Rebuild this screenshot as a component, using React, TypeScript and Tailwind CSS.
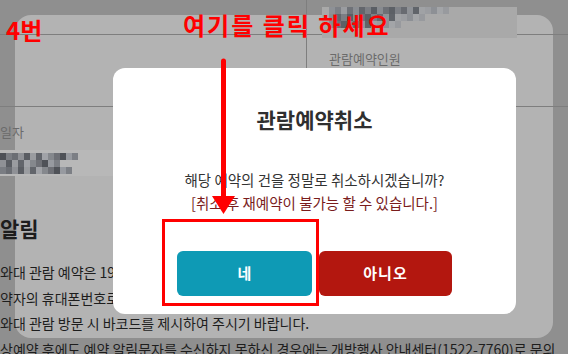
const KR = "font-['Noto_Sans_CJK_KR','Noto_Sans',sans-serif]"

// pixelated (mosaic) blur of a private value
const TOP_MOSAIC = [
  "#8e9196", "#7d8086", "#9a9ca0", "#6f7278", "#8a8d92", "#63666c", "#7b7e84", "#5a5e64",
  "#888b90", "#6d7076", "#5c6066", "#7e8187", "#686b71", "#8f9297", "#60646a", "#a0a2a5",
  "#9b9da1", "#8d9095", "#a3a5a8", "#989a9e",
]
const LEFT_MOSAIC = [
  "#4d5056", "#7a7d83", "#6b6e74", "#8f9196", "#5a5d63", "#9a9ca0", "#62656b", "#a1a3a8",
  "#85888d", "#6e7076", "#4f5258", "#979aa0", "#7c7f85",
]

function Mosaic({ colors }: { colors: string[] }) {
  return (
    <div className="grid gap-0" style={{ gridTemplateColumns: `repeat(${colors.length}, 6px)` }}>
      {colors.map((c, i) => (
        <div key={i} className="h-[7px]" style={{ backgroundColor: c }} />
      ))}
    </div>
  )
}

const NOTICE = [
  "와대 관람 예약은 19",
  "약자의 휴대폰번호로",
  "와대 관람 방문 시 바코드를 제시하여 주시기 바랍니다.",
  "상예약 후에도 예약 알림문자를 수신하지 못하신 경우에는 개방행사 안내센터(1522-7760)로 문의",
]

export default function App() {
  return (
    <div className={`relative w-[568px] h-[354px] overflow-hidden bg-[#8f8f8f] ${KR}`}>
      {/* dimmed page panel */}
      <div className="absolute left-[15px] top-[15px] w-[538px] h-[323px] rounded-[16px] bg-[#b3b3b3]" />

      {/* page under the overlay */}
      <div className="relative flex flex-col text-[#1d1d1d]">
        <div className="grid grid-cols-[307px_1fr] h-[35px] border-b border-[#7e7e7e]">
          <div className="border-r border-[#7e7e7e]" />
          <div className="pl-[15px] pt-[7px]">
            <div className="w-[195px] h-[31px] bg-[#a9a9a9] pl-[7px]">
              <Mosaic colors={TOP_MOSAIC} />
              <Mosaic colors={TOP_MOSAIC.slice(4)} />
              <Mosaic colors={TOP_MOSAIC.slice(8)} />
            </div>
          </div>
        </div>
        <div className="grid grid-cols-[307px_1fr] h-[72px] border-b border-[#7e7e7e]">
          <div className="border-r border-[#7e7e7e]" />
          <div className="pl-[22px] pt-[15px] text-[13px] leading-[18px] text-[#6b6b6b]">관람예약인원</div>
        </div>

        <div className="mt-[16px] text-[13px] leading-[18px] text-[#6b6b6b]">일자</div>
        <div className="mt-[9px] w-[113px] h-[26px] bg-[#b8b8b8] pt-[3px]">
          <Mosaic colors={LEFT_MOSAIC} />
          <Mosaic colors={LEFT_MOSAIC.slice(3)} />
          <Mosaic colors={LEFT_MOSAIC.slice(1)} />
        </div>

        <div className="mt-[37px] text-[21px] leading-[30px] font-bold">알림</div>
        <div className="mt-[17px] flex flex-col text-[14px] leading-[25.5px] whitespace-nowrap">
          {NOTICE.map((line) => (
            <p key={line}>{line}</p>
          ))}
        </div>
      </div>

      {/* confirm dialog */}
      <div className="absolute left-[113px] top-[68px] w-[403px] h-[246px] rounded-[12px] bg-white flex flex-col items-center">
        <h2 className="mt-[37px] text-[21px] leading-[29px] font-bold text-[#2f2f2f]">관람예약취소</h2>
        <div className="mt-[34px] flex flex-col items-center text-[14.5px] leading-[23px]">
          <p className="text-[#333333]">해당 예약의 건을 정말로 취소하시겠습니까?</p>
          <p className="text-[#7a1c1c]">[취소 후 재예약이 불가능 할 수 있습니다.]</p>
        </div>
        <div className="mt-[37px] flex gap-[7px]">
          <button className="w-[135px] h-[45px] rounded-[6px] bg-[#0e9ab5] text-white text-[15px] font-bold">네</button>
          <button className="w-[133px] h-[45px] rounded-[6px] bg-[#b3170f] text-white text-[15px] font-bold tracking-[1px]">아니오</button>
        </div>
      </div>

      {/* annotations */}
      <div className="absolute left-[6px] top-[15px] text-[24px] leading-[30px] font-bold text-[#ff0000]">4번</div>
      <div className="absolute left-[183px] top-[10px] text-[24px] leading-[30px] font-bold tracking-[2px] text-[#ff0000] whitespace-nowrap">
        여기를 클릭 하세요
      </div>
      <svg className="absolute left-[205px] top-[58px]" width="40" height="160" viewBox="0 0 40 160">
        <line x1="18.5" y1="3" x2="18.5" y2="142" stroke="#ff0000" strokeWidth="5" strokeLinecap="round" />
        <polygon points="7,138 30,138 18.5,156" fill="#ff0000" />
      </svg>
      <div className="absolute left-[162px] top-[219px] w-[157px] h-[87px] border-[3px] border-[#ff0000]" />
    </div>
  )
}
